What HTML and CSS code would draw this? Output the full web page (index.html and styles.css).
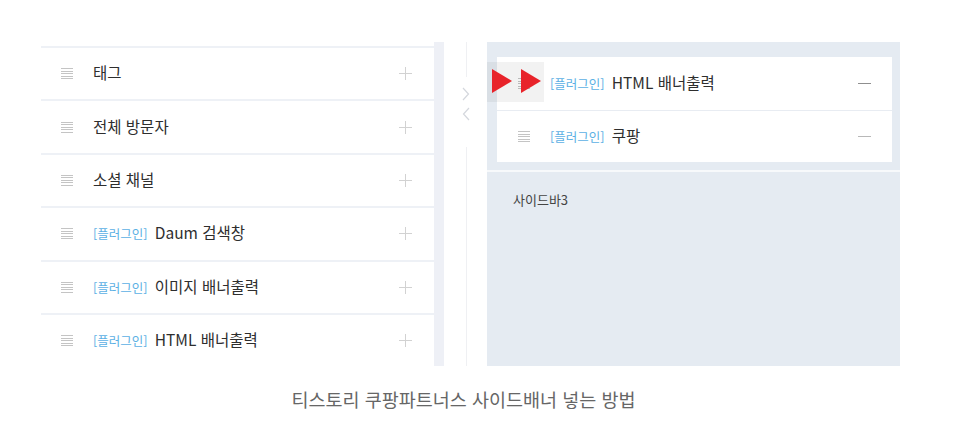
FILE: index.html
```html
<!DOCTYPE html>
<html lang="ko">
  <head>
    <meta charset="UTF-8" />
    <title>티스토리 쿠팡파트너스 사이드배너 넣는 방법</title>
    <link rel="stylesheet" href="styles.css">
  </head>
  <body>
    <figure class="figure">
      <div class="shot">
        <div class="module-list">
          <div class="row"><span class="handle"></span><span class="name">태그</span><span class="plus"></span></div>
          <div class="row"><span class="handle"></span><span class="name">전체 방문자</span><span class="plus"></span></div>
          <div class="row"><span class="handle"></span><span class="name">소셜 채널</span><span class="plus"></span></div>
          <div class="row"><span class="handle"></span><span class="name"><em>[플러그인]</em> Daum 검색창</span><span class="plus"></span></div>
          <div class="row"><span class="handle"></span><span class="name"><em>[플러그인]</em> 이미지 배너출력</span><span class="plus"></span></div>
          <div class="row"><span class="handle"></span><span class="name"><em>[플러그인]</em> HTML 배너출력</span><span class="plus"></span></div>
        </div>
        <div class="scrollbar"></div>
        <div class="mover">
          <div class="mover-line top"></div>
          <svg class="chev" width="8" height="14" viewBox="0 0 8 14"><path d="M1 1 L6.5 7 L1 13" fill="none" stroke="#d4d7dd" stroke-width="1.2"/></svg>
          <svg class="chev" width="8" height="14" viewBox="0 0 8 14"><path d="M7 1 L1.5 7 L7 13" fill="none" stroke="#d4d7dd" stroke-width="1.2"/></svg>
          <div class="mover-line bottom"></div>
        </div>
        <div class="sidebar">
          <div class="slot">
            <div class="card">
              <div class="row small">
                <span class="handle"></span><span class="name"><em>[플러그인]</em> HTML 배너출력</span><span class="minus"></span>
                <div class="drag-mark"></div>
                <div class="arrows">
                  <svg width="20" height="24" viewBox="0 0 20 24"><polygon points="0,0 20,12 0,24" fill="#e8232a"/></svg>
                  <svg width="20" height="24" viewBox="0 0 20 24"><polygon points="0,0 20,12 0,24" fill="#e8232a"/></svg>
                </div>
              </div>
              <div class="row small">
                <span class="handle"></span><span class="name"><em>[플러그인]</em> 쿠팡</span><span class="minus light"></span>
              </div>
            </div>
          </div>
          <div class="slot-empty">사이드바3</div>
        </div>
      </div>
      <figcaption>티스토리 쿠팡파트너스 사이드배너 넣는 방법</figcaption>
    </figure>
  </body>
</html>
```

FILE: styles.css
```css
* {
  box-sizing: border-box;
}
body {
  margin: 0;
  background: #fff;
  font-family: 'Noto Sans CJK KR', 'Noto Sans', sans-serif;
  color: #333;
}
.figure {
  margin: 0;
  padding: 42px 0 0 41px;
  width: 900px;
}
.shot {
  display: flex;
  height: 324px;
}
.module-list {
  width: 393px;
  padding-top: 4px;
  background: #fff;
}
.row {
  position: relative;
  display: flex;
  align-items: center;
  height: 53.4px;
  border-top: 2px solid #eef1f6;
  padding: 0 22px 0 20px;
}
.handle {
  width: 12px;
  height: 11px;
  flex: none;
  background: repeating-linear-gradient(to bottom, #c4c4c4 0, #c4c4c4 1px, transparent 1px, transparent 2.5px);
}
.name {
  flex: 1;
  margin: -3px 0 0 20px;
  font-size: 15.5px;
  color: #2e2e2e;
  white-space: nowrap;
}
.name em {
  font-style: normal;
  font-size: 12.5px;
  color: #5cb0e4;
  margin-right: 3px;
}
.plus {
  position: relative;
  width: 13px;
  height: 13px;
}
.plus::before, .plus::after {
  content: "";
  position: absolute;
  background: #d2d2d2;
}
.plus::before {
  left: 0;
  right: 0;
  top: 6px;
  height: 1px;
}
.plus::after {
  top: 0;
  bottom: 0;
  left: 6px;
  width: 1px;
}
.scrollbar {
  width: 10px;
  background: #eef0f6;
}
.mover {
  width: 43px;
  display: flex;
  flex-direction: column;
  align-items: center;
  padding-left: 1px;
}
.mover-line {
  width: 1px;
  background: #eff0f3;
}
.mover-line.top {
  height: 35px;
  margin-bottom: 10px;
}
.mover-line.bottom {
  flex: 1;
  margin-top: 20px;
}
.chev {
  display: block;
  margin-bottom: 6px;
}
.sidebar {
  width: 413px;
  background: #e5ebf2;
  display: flex;
  flex-direction: column;
}
.slot {
  padding: 15px 8px 8px 10px;
  border-bottom: 2px solid #f7f9fb;
}
.card {
  background: #fff;
}
.row.small {
  height: 52.5px;
  border-top: none;
  padding: 0 21px 0 21px;
}
.row.small + .row.small {
  border-top: 1px solid #e8ecf2;
}
.row.small .name {
  margin-left: 20px;
}
.minus {
  width: 13px;
  height: 1.5px;
  background: #8f8f8f;
}
.minus.light {
  height: 1px;
  background: #b8b8b8;
}
.drag-mark {
  position: absolute;
  left: -10px;
  top: 5px;
  width: 57px;
  height: 40px;
  background: rgba(0, 0, 0, 0.05);
}
.arrows {
  position: absolute;
  left: -5px;
  top: 12px;
  display: flex;
  gap: 9px;
}
.arrows svg {
  display: block;
}
.slot-empty {
  flex: 1;
  padding: 18px 26px;
  font-size: 13px;
  color: #444;
}
figcaption {
  margin-top: 20px;
  padding-right: 14px;
  text-align: center;
  font-size: 18.5px;
  color: #666;
}
```
